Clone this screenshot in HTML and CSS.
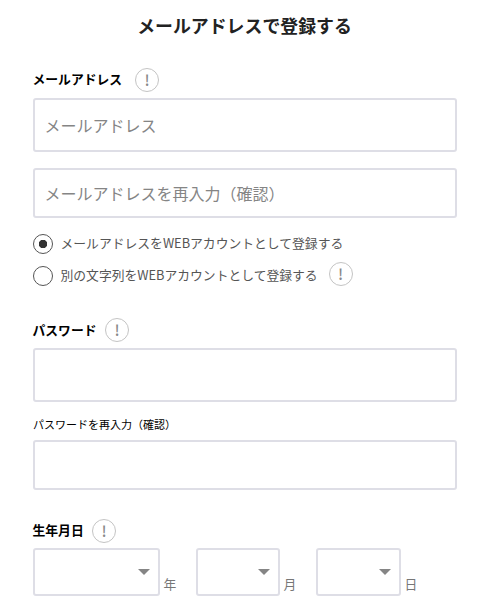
FILE: index.html
```html
<!DOCTYPE html>
<html lang="ja">
<head>
  <meta charset="UTF-8">
  <title>メールアドレスで登録する</title>
  <link rel="stylesheet" href="styles.css">
</head>
<body>

  <form class="register">
    <h1>メールアドレスで登録する</h1>

    <div class="label-row">
      <label for="email">メールアドレス</label>
      <span class="help">!</span>
    </div>
    <input type="text" class="field tall" id="email" placeholder="メールアドレス">
    <input type="text" class="field confirm" placeholder="メールアドレスを再入力（確認）">

    <label class="radio">
      <input type="radio" name="account" checked>
      <span>メールアドレスをWEBアカウントとして登録する</span>
    </label>
    <label class="radio other">
      <input type="radio" name="account">
      <span>別の文字列をWEBアカウントとして登録する</span>
      <span class="help">!</span>
    </label>

    <div class="label-row password">
      <label for="password">パスワード</label>
      <span class="help">!</span>
    </div>
    <input type="password" class="field tall" id="password">
    <label class="sub-label" for="password2">パスワードを再入力（確認）</label>
    <input type="password" class="field" id="password2">

    <div class="label-row birthday">
      <label for="year">生年月日</label>
      <span class="help">!</span>
    </div>
    <div class="date">
      <div class="select year"><select id="year"></select></div>
      <span class="unit">年</span>
      <div class="select"><select></select></div>
      <span class="unit">月</span>
      <div class="select day"><select></select></div>
      <span class="unit">日</span>
    </div>
  </form>

</body>
</html>
```
FILE: styles.css
```css
* {
  box-sizing: border-box;
}
body {
  margin: 0;
  background: #fff;
  color: #000;
  font-family: "Noto Sans CJK JP", sans-serif;
}
.register {
  width: 424px;
  margin: 0 0 0 33px;
}
h1 {
  margin: 0;
  padding-top: 12px;
  height: 68px;
  color: #222;
  font-size: 17.9px;
  line-height: 26px;
  text-align: center;
  text-indent: -1px;
}
.label-row {
  display: flex;
  align-items: center;
  gap: 13px;
  height: 24px;
  margin-bottom: 6px;
  font-size: 12.8px;
  font-weight: bold;
}
.label-row label {
  margin: -3px 0 0 -0.5px;
}
.help {
  display: flex;
  justify-content: center;
  align-items: center;
  width: 24px;
  height: 24px;
  border: 1px solid #c4c4c4;
  border-radius: 50%;
  color: #888;
  font-size: 15px;
  font-weight: 500;
  line-height: 22px;
}
.field {
  display: block;
  width: 100%;
  height: 50px;
  padding: 0 9.5px;
  border: 2px solid #dedee6;
  border-radius: 3px;
  background: #fff;
  font-family: inherit;
  font-size: 16px;
}
.field.tall {
  height: 54px;
}
.field::placeholder {
  color: #858585;
}
.confirm {
  margin: 16px 0;
}
.radio {
  display: flex;
  height: 20px;
  color: #555;
  font-size: 12.8px;
  line-height: 18px;
}
.radio input {
  appearance: none;
  width: 20px;
  height: 20px;
  margin: 0 7.5px 0 0;
  border: 1px solid #555;
  border-radius: 50%;
}
.radio input:checked {
  background: radial-gradient(#333 4px, #fff 4.5px);
}
.radio.other {
  margin-top: 12px;
}
.radio .help {
  margin: -4px 0 0 11px;
}
.password {
  gap: 8.5px;
  margin-top: 32px;
}
.password label {
  margin-top: -2px;
}
.sub-label {
  display: block;
  height: 38px;
  padding-top: 14px;
  font-size: 11px;
  line-height: 16px;
}
.birthday {
  gap: 8.5px;
  margin-top: 29px;
  margin-bottom: 5px;
}
.date {
  display: flex;
}
.select {
  position: relative;
  width: 84px;
  height: 48px;
}
.select.year {
  width: 127px;
}
.select.day {
  width: 85px;
}
.select::after {
  content: "";
  position: absolute;
  top: 21px;
  right: 10px;
  border: 6px solid transparent;
  border-top-color: #858585;
  border-bottom: 0;
}
.select select {
  appearance: none;
  width: 100%;
  height: 100%;
  border: 2px solid #dedee6;
  border-radius: 3px;
  background: #fff;
}
.unit {
  width: 36px;
  padding: 26px 0 0 3.5px;
  color: #777;
  font-size: 12.8px;
  line-height: 20px;
}
```
